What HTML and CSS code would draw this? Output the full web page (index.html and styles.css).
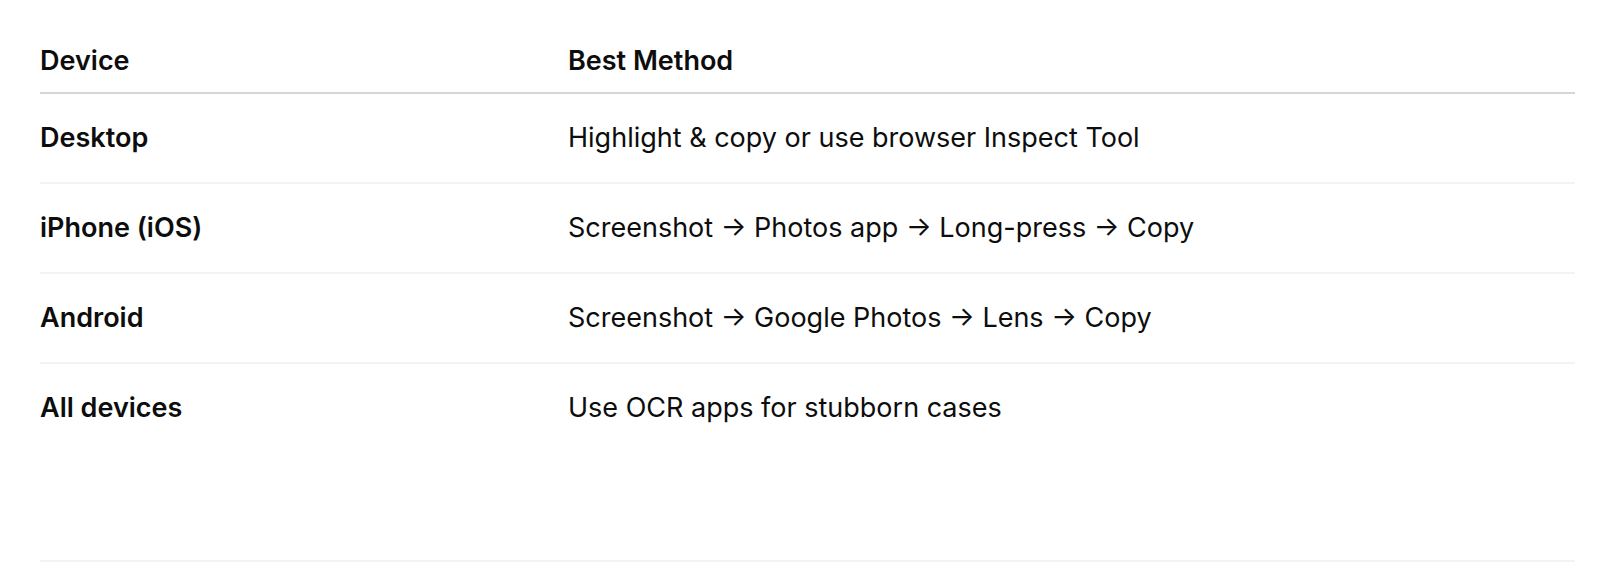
FILE: index.html
```html
<!DOCTYPE html>
<html lang="en">
<head>
<meta charset="utf-8">
<title>Device methods</title>
<link rel="stylesheet" href="styles.css">
</head>
<body>
<div class="page">
  <table class="methods">
    <thead>
      <tr><th class="col-device">Device</th><th>Best Method</th></tr>
    </thead>
    <tbody>
      <tr><td class="device">Desktop</td><td>Highlight &amp; copy or use browser Inspect Tool</td></tr>
      <tr><td class="device">iPhone (iOS)</td><td>Screenshot → Photos app → Long-press → Copy</td></tr>
      <tr><td class="device">Android</td><td>Screenshot → Google Photos → Lens → Copy</td></tr>
      <tr><td class="device">All devices</td><td>Use OCR apps for stubborn cases</td></tr>
    </tbody>
  </table>
  <div class="separator"></div>
</div>
</body>
</html>
```

FILE: styles.css
```css
html, body {
  margin: 0;
  padding: 0;
  background: #ffffff;
}

body {
  font-family: Inter, "Noto Sans", "Liberation Sans", sans-serif;
  color: #0d0d0d;
}

.page {
  padding: 28px 43px 0 40px;
}

.methods {
  width: 100%;
  border-collapse: collapse;
  table-layout: fixed;
  font-size: 27px;
  line-height: 32px;
}

.methods th {
  text-align: left;
  font-weight: 600;
  padding: 17px 0 15px;
  border-bottom: 2px solid #d6d6d6;
}

.methods .col-device {
  width: 528px;
}

.methods td {
  padding: 28px 0;
  font-weight: 400;
  border-bottom: 2px solid #f3f3f3;
}

.methods tbody tr:last-child td {
  border-bottom: none;
}

.methods td.device {
  font-weight: 600;
}

.separator {
  margin-top: 108px;
  height: 2px;
  background: #f3f3f3;
}
```
